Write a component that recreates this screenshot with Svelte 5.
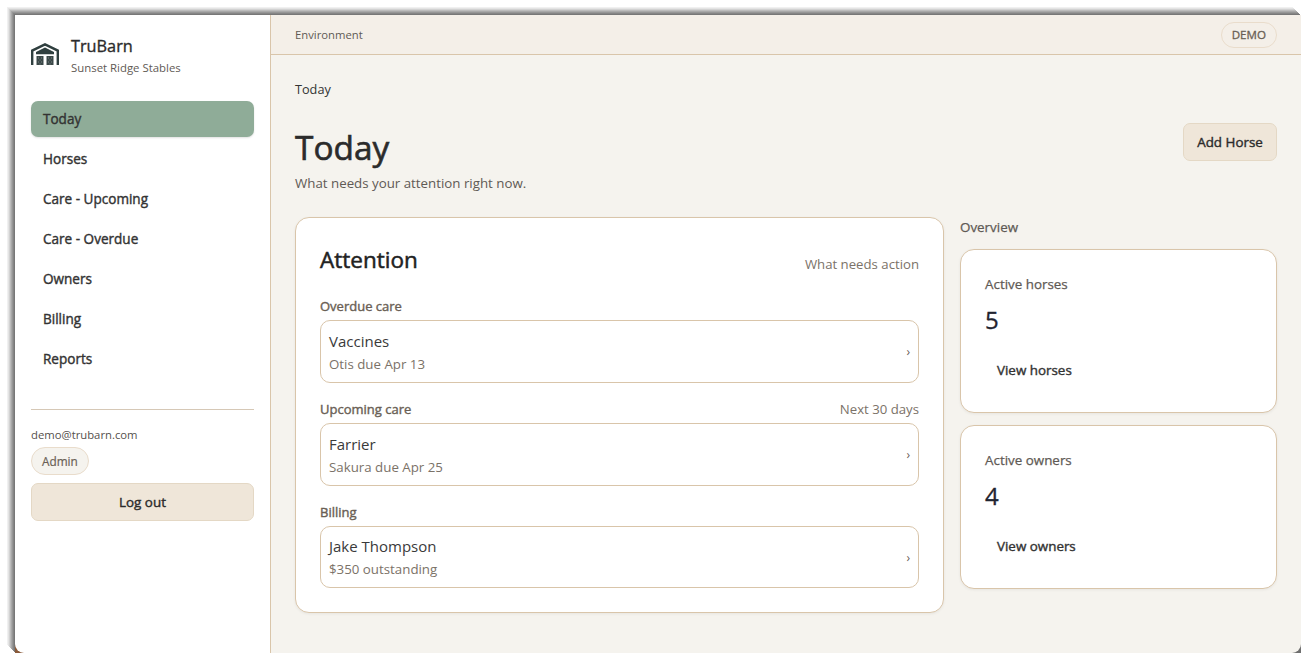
<script>
  const nav = ['Today', 'Horses', 'Care - Upcoming', 'Care - Overdue', 'Owners', 'Billing', 'Reports'];
  const groups = [
    { label: 'Overdue care', note: '', title: 'Vaccines', sub: 'Otis due Apr 13' },
    { label: 'Upcoming care', note: 'Next 30 days', title: 'Farrier', sub: 'Sakura due Apr 25' },
    { label: 'Billing', note: '', title: 'Jake Thompson', sub: '$350 outstanding' }
  ];
  const stats = [
    { label: 'Active horses', value: '5', link: 'View horses' },
    { label: 'Active owners', value: '4', link: 'View owners' }
  ];
</script>

<div class="frame">
  <div class="window">
    <div class="shell">
      <aside class="sidebar">
        <div class="brand">
          <svg class="logo" viewBox="0 0 28 22" width="28" height="22" aria-hidden="true">
            <path d="M1.2 22V7.6L14 1.4l12.8 6.2V22" fill="none" stroke="#2f3f3f" stroke-width="2.4"/>
            <path d="M5 9l9-4.6L23 9v2.2H5z" fill="#2f3f3f"/>
            <path d="M5.5 13h7v9h-7zM15.5 13h7v9h-7z" fill="#3b4848"/>
            <path d="M7 15h1M10 15h1M8.5 17h1M7 19h1M10 19h1M8.5 21h1M17 15h1M20 15h1M18.5 17h1M17 19h1M20 19h1M18.5 21h1" stroke="#7d8888" stroke-width="1"/>
          </svg>
          <div class="brand-text">
            <div class="brand-name">TruBarn</div>
            <div class="brand-sub">Sunset Ridge Stables</div>
          </div>
        </div>
        <nav class="nav">
          {#each nav as item, i}
            <div class="nav-item" class:active={i === 0}>{item}</div>
          {/each}
        </nav>
        <div class="account">
          <div class="email">demo@trubarn.com</div>
          <span class="pill admin">Admin</span>
          <button class="btn logout">Log out</button>
        </div>
      </aside>
      <main class="main">
        <header class="topbar">
          <span>Environment</span>
          <span class="pill demo">DEMO</span>
        </header>
        <div class="content">
          <div class="crumb">Today</div>
          <div class="head">
            <div>
              <h1>Today</h1>
              <p class="lead">What needs your attention right now.</p>
            </div>
            <button class="btn add">Add Horse</button>
          </div>
          <div class="columns">
            <section class="card attention">
              <div class="att-head">
                <h2>Attention</h2>
                <span class="muted">What needs action</span>
              </div>
              {#each groups as g}
                <div class="group">
                  <div class="group-head">
                    <span class="group-label">{g.label}</span>
                    {#if g.note}<span class="muted">{g.note}</span>{/if}
                  </div>
                  <div class="row">
                    <div>
                      <div class="row-title">{g.title}</div>
                      <div class="row-sub">{g.sub}</div>
                    </div>
                    <span class="chev">›</span>
                  </div>
                </div>
              {/each}
            </section>
            <div class="side">
              <div class="side-title">Overview</div>
              {#each stats as s}
                <section class="card stat">
                  <div class="stat-label">{s.label}</div>
                  <div class="stat-value">{s.value}</div>
                  <div class="stat-link">{s.link}</div>
                </section>
              {/each}
            </div>
          </div>
        </div>
      </main>
    </div>
  </div>
</div>

<style>
  :global(body) {
    margin: 0;
    background: #fff;
  }
  .frame {
    height: 653px;
    box-sizing: border-box;
    padding: 15px 0 0 15px;
    overflow: hidden;
    font-family: "Open Sans", "Noto Sans", sans-serif;
    color: #2b2b2b;
  }
  .window {
    height: 638px;
    width: 1286px;
    background: linear-gradient(to right, #8a5a3a 50%, #6f6f6f 50%);
    box-shadow:
      -1px -1px 0 #777,
      -2px -2px 0 #858585,
      -3px -3px 0 #969696,
      -4px -4px 0 #a8a8a8,
      -5px -5px 0 #bcbcbc,
      -6px -6px 0 #d2d2d2,
      -7px -7px 0 #e4e4e4,
      -8px -8px 0 #f0f0f0;
  }
  .shell {
    display: flex;
    height: 100%;
    border-radius: 0 0 9px 9px;
    overflow: hidden;
  }
  .sidebar {
    width: 256px;
    box-sizing: border-box;
    flex: none;
    background: #fff;
    border-right: 1px solid #d9c5aa;
    padding: 19px 16px;
  }
  .brand {
    display: flex;
    align-items: center;
    gap: 12px;
    height: 40px;
    margin-bottom: 27px;
  }
  .brand-text { margin-top: 2px; }
  .brand-name {
    font-size: 16.3px;
    font-weight: 500;
    -webkit-text-stroke: .35px currentColor;
    line-height: 22px;
  }
  .brand-sub {
    font-size: 11.4px;
    color: #5f5a55;
    margin-top: 3px;
    line-height: 16px;
  }
  .nav {
    display: flex;
    flex-direction: column;
    gap: 4px;
    padding-bottom: 32px;
    border-bottom: 1px solid #d6c8b6;
  }
  .nav-item {
    height: 36px;
    line-height: 36px;
    padding: 0 12px;
    border-radius: 7px;
    font-size: 13.55px;
    font-weight: 500;
    -webkit-text-stroke: .4px currentColor;
    color: #333;
  }
  .nav-item.active {
    background: #8fac98;
    box-shadow: 0 1px 2px rgba(0,0,0,.12);
  }
  .account { padding-top: 17px; }
  .email {
    font-size: 11.3px;
    color: #55504c;
    line-height: 16px;
    margin-bottom: 4px;
  }
  .pill {
    display: inline-block;
    border: 1px solid #e9dccb;
    border-radius: 14px;
    background: #f5f3ee;
    color: #6a5f55;
    font-size: 11.8px;
    font-weight: 500;
    -webkit-text-stroke: .2px currentColor;
  }
  .admin { padding: 5px 10px; line-height: 16px; }
  .btn {
    font-family: inherit;
    font-size: 13.4px;
    font-weight: 500;
    -webkit-text-stroke: .4px currentColor;
    color: #2b2b2b;
    background: #efe6d9;
    border: 1px solid #e4d8c5;
    border-radius: 7px;
    box-sizing: border-box;
    height: 38px;
    padding: 0;
  }
  .logout { display: block; width: 100%; margin-top: 8px; }
  .main {
    flex: 1;
    min-width: 0;
    background: #f5f3ee;
  }
  .topbar {
    height: 40px;
    box-sizing: border-box;
    background: #f4efe8;
    border-bottom: 1px solid #d9c5aa;
    display: flex;
    align-items: center;
    justify-content: space-between;
    padding: 0 24px;
    font-size: 11.3px;
    color: #5f5a55;
  }
  .demo { padding: 3px 10px; line-height: 18px; font-size: 11.6px; border-radius: 14px; background: #f4efe8; -webkit-text-stroke: .3px currentColor; }
  .content { padding: 25px 24px 0; }
  .crumb { font-size: 12.7px; line-height: 18px; color: #333; }
  .head {
    display: flex;
    justify-content: space-between;
    align-items: flex-start;
    margin-top: 25px;
    margin-bottom: 24px;
  }
  h1 {
    margin: 1px 0 0;
    font-size: 33.4px;
    font-weight: 500;
    -webkit-text-stroke: .6px currentColor;
    line-height: 46px;
    color: #2b2b2b;
  }
  .lead { margin: 3px 0 0; font-size: 13.3px; line-height: 20px; color: #5f5a55; }
  .add { width: 94px; }
  .columns { display: flex; gap: 16px; align-items: flex-start; }
  .card {
    background: #fff;
    border: 1px solid #d9c5aa;
    border-radius: 14px;
    box-sizing: border-box;
    box-shadow: 0 1px 3px rgba(0,0,0,.06);
  }
  .attention { width: 649px; height: 396px; padding: 24px; }
  .att-head {
    display: flex;
    justify-content: space-between;
    align-items: flex-end;
    margin: 0 0 18px;
  }
  h2 { margin: 0; font-size: 22.5px; font-weight: 500; -webkit-text-stroke: .5px currentColor; line-height: 36px; color: #222; }
  .muted { font-size: 13.2px; color: #7b7268; line-height: 20px; }
  .att-head .muted { padding-bottom: 4px; }
  .group { margin-bottom: 16px; }
  .group-head {
    display: flex;
    justify-content: space-between;
    height: 20px;
    align-items: center;
    margin-bottom: 4px;
  }
  .group-label { font-size: 13px; font-weight: 500; -webkit-text-stroke: .4px currentColor; color: #6a5f55; }
  .row {
    height: 63px;
    box-sizing: border-box;
    border: 1px solid #d9c5aa;
    border-radius: 10px;
    padding: 0 8px;
    display: flex;
    justify-content: space-between;
    align-items: center;
  }
  .group:last-child .row { height: 62px; }
  .row-title { font-size: 15px; line-height: 22px; color: #3a3a3a; }
  .row-sub { font-size: 13.3px; line-height: 20px; color: #7b7268; margin-top: 2px; }
  .chev { font-size: 12px; color: #6a5f55; }
  .side { width: 317px; }
  .side-title { font-size: 13.4px; font-weight: 500; -webkit-text-stroke: .25px currentColor; color: #5f5a55; line-height: 20px; margin: 0 0 12px; }
  .stat { height: 164px; padding: 24px; margin-bottom: 12px; }
  .stat-label { font-size: 13.4px; font-weight: 500; -webkit-text-stroke: .25px currentColor; color: #5f5a55; line-height: 20px; }
  .stat-value { font-size: 24px; font-weight: 500; -webkit-text-stroke: .3px currentColor; color: #1f2430; line-height: 32px; margin-top: 10px; }
  .stat-link { font-size: 13.4px; font-weight: 500; -webkit-text-stroke: .4px currentColor; color: #333; line-height: 20px; margin: 24px 0 0 12px; }
</style>
